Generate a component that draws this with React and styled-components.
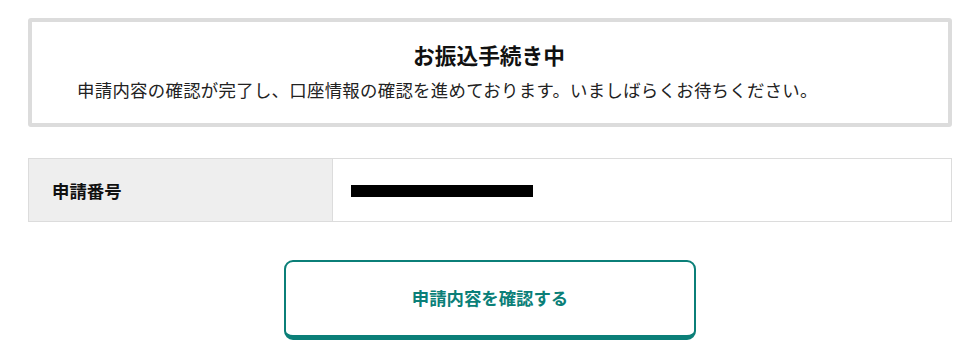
import React from 'react'
import { styled, createGlobalStyle } from 'styled-components';

const GlobalStyle = createGlobalStyle`
  body{
    margin:0;
    background:#fff;
    font-family:"Noto Sans CJK JP", "Noto Sans", sans-serif;
    color:#111;
  }
`;

function App() {
    return (
        <Page>
           <GlobalStyle />
           <StatusBox>
                <h2>お振込手続き中</h2>
                <p>申請内容の確認が完了し、口座情報の確認を進めております。いましばらくお待ちください。</p>
           </StatusBox>

           <InfoTable>
                <Label>申請番号</Label>
                <Value>
                    <Masked width={182} />
                </Value>
           </InfoTable>

           <Actions>
                <ConfirmButton type="button">申請内容を確認する</ConfirmButton>
           </Actions>
        </Page>
    )
}

const Page = styled.div`
   padding:18px 26px 0 28px;
`;

const StatusBox = styled.div`
   border:4px solid #dcdcdc;
   border-radius:3px;
   padding:20px 20px 20px 45px;

     h2{
        margin:0;
        text-align:center;
        padding-right:27px;
        font-size:21.7px;
        line-height:26px;
        font-weight:700;
        color:#111;
     }

     p{
        margin:9px 0 0;
        font-size:17.4px;
        line-height:26px;
        letter-spacing:0.3px;
        color:#222;
     }
`;

const InfoTable = styled.div`
   margin-top:31px;
   display:grid;
   grid-template-columns:304px 1fr;
   border:1px solid #dcdcdc;
   height:64px;
   box-sizing:border-box;
`;

const Label = styled.div`
   background:#eeeeee;
   border-right:1px solid #dcdcdc;
   display:flex;
   align-items:center;
   padding-left:23px;
   font-size:17.4px;
   font-weight:700;
   color:#111;
`;

const Value = styled.div`
   display:flex;
   align-items:center;
   padding-left:18px;
`;

const Masked = styled.span`
   display:block;
   width:${p => p.width}px;
   height:12px;
   margin-top:1px;
   background:#000;
`;

const Actions = styled.div`
   margin-top:38px;
   display:flex;
   justify-content:center;
`;

const ConfirmButton = styled.button`
   width:412px;
   height:80px;
   box-sizing:border-box;
   background:#fff;
   border:2px solid #0b7f78;
   border-bottom-width:5px;
   border-radius:9px;
   font-family:"Noto Sans CJK JP", "Noto Sans", sans-serif;
   font-size:17.4px;
   font-weight:700;
   color:#0b7f78;
   padding:0 0 2px;
   cursor:pointer;
`;

export default App
